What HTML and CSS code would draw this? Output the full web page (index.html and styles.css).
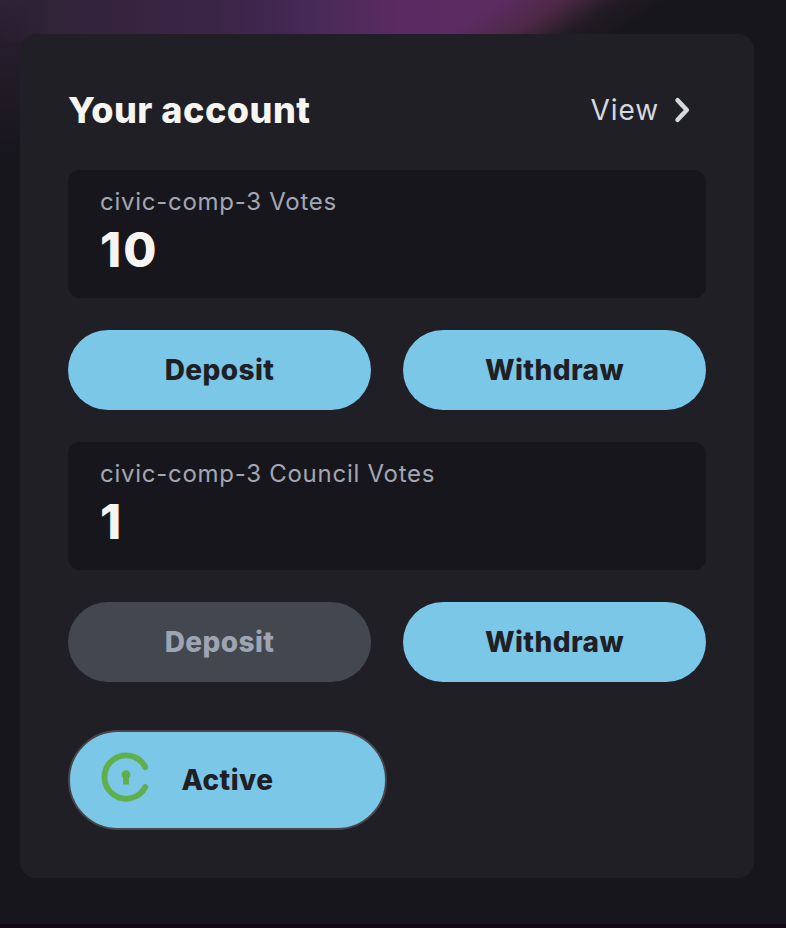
FILE: index.html
```html
<!DOCTYPE html>
<html lang="en">
<head>
<meta charset="utf-8">
<title>Your account</title>
<link rel="stylesheet" href="styles.css">
</head>
<body>
<main class="card">
  <header class="head">
    <h1 class="title">Your account</h1>
    <a class="view"><span class="view-text">View</span>
      <svg class="chevron" width="18" height="28" viewBox="0 0 18 28"><path d="M3.600 4.200 12.800 14 3.600 23.800" fill="none" stroke="currentColor" stroke-width="4.600" stroke-linecap="round" stroke-linejoin="round"/></svg>
    </a>
  </header>
  <section class="box"><p class="label">civic-comp-3 Votes</p><p class="value">10</p></section>
  <div class="row"><button class="btn">Deposit</button><button class="btn">Withdraw</button></div>
  <section class="box"><p class="label">civic-comp-3 Council Votes</p><p class="value">1</p></section>
  <div class="row"><button class="btn btn-off">Deposit</button><button class="btn">Withdraw</button></div>
  <button class="pass">
    <svg class="logo" width="50" height="50" viewBox="0 0 50 50"><path d="M45.300 15.200A21.600 21.600 0 1 0 45.300 35" fill="none" stroke="#5fb04c" stroke-width="5.800" stroke-linecap="round"/><path d="M23 32.500V25.800A4.400 4.400 0 1 1 29 25.800V32.500Z" fill="#5fb04c"/></svg>
    <span class="pass-text">Active</span>
  </button>
</main>
</body>
</html>
```

FILE: styles.css
```css
* { box-sizing: border-box; margin: 0; }
body {
  height: 928px;
  padding: 34px 32px 0 20px;
  overflow: hidden;
  border-bottom: 4px solid #130816;
  background:
    linear-gradient(146deg, #5b2a62 0, #5b2b61 35px, #4e2946 68px, rgba(38, 29, 39, .7) 100px, transparent 130px) 440px 0 / 290px 42px no-repeat,
    linear-gradient(to right, rgba(44, 35, 49, 0), #33233a 70px, #3a2545 200px, #3e264d 260px, #4b2a58 330px, #5b2a62 400px, #5b2a62 440px) 0 0 / 440px 42px no-repeat,
    linear-gradient(to bottom, #2c2335, #261d2c 42px, #17161c 160px) 0 0 / 40px 100% no-repeat,
    linear-gradient(to right, #2a2130, #3a2545) 40px 0 / 400px 42px no-repeat,
    #17161c;
  font-family: Inter, sans-serif;
  color: #f6f5f2;
}
.card { height: 844px; padding: 48px; border-radius: 16px; background: #201f26; }
.head { display: flex; justify-content: space-between; align-items: center; height: 56px; margin-bottom: 32px; padding-right: 14px; }
.title { font-size: 36px; line-height: 56px; font-weight: 800; letter-spacing: .5px; }
.view { display: flex; align-items: center; gap: 15px; color: #d5d8dd; font-size: 28px; letter-spacing: .9px; }
.chevron { display: block; }
.box { height: 128px; padding: 16px 32px; border-radius: 12px; background: #17161c; }
.label { font-size: 24px; line-height: 32px; letter-spacing: .73px; color: #a2a7b3; }
.value { font-size: 48px; line-height: 64px; font-weight: 800; letter-spacing: 2px; }
.row { display: grid; grid-template-columns: 1fr 1fr; gap: 32px; margin: 32px 0; }
.btn { height: 80px; border: 0; border-radius: 40px; background: #7ac7e7; color: #201f26; font: 800 28px Inter, sans-serif; letter-spacing: .4px; }
.btn-off { background: #43474f; color: #9fa4b3; }
.pass { display: flex; align-items: center; width: 319px; height: 100px; margin-top: 48px; padding: 0 30px; border: 2px solid #484648; border-radius: 50px; background: #7ac7e7; color: #201f26; font: 800 28px Inter, sans-serif; letter-spacing: .4px; }
.logo { margin-top: -6px; }
.pass-text { margin-left: 31.500px; }
```
